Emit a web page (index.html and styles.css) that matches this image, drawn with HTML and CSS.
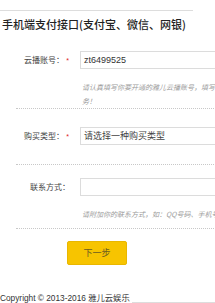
FILE: index.html
```html
<!DOCTYPE html>
<html lang="zh-CN">
<head>
<meta charset="utf-8">
<title>手机端支付接口</title>
<link rel="stylesheet" href="styles.css">
</head>
<body>
<div class="page">
  <div class="topline"></div>
  <h1 class="title">手机端支付接口(支付宝、微信、网银)</h1>
  <div class="form">
    <div class="row row-account">
      <div class="field">
        <div class="label">云播账号：<span class="req">*</span></div>
        <div class="input">zt6499525</div>
      </div>
      <p class="help">请认真填写你要开通的雅儿云播账号，填写错误将无法提供服务！</p>
    </div>
    <div class="row row-type">
      <div class="field">
        <div class="label">购买类型：<span class="req">*</span></div>
        <div class="input select">请选择一种购买类型</div>
      </div>
    </div>
    <div class="row row-contact">
      <div class="field">
        <div class="label label-opt">联系方式：</div>
        <div class="input"></div>
      </div>
      <p class="help">请附加你的联系方式，如：QQ号码、手机号码</p>
    </div>
  </div>
  <div class="actions">
    <div class="btn">下一步</div>
  </div>
  <div class="footer">
    <span class="copy">Copyright © 2013-2016 雅儿云娱乐</span>
    <span class="footer-rule"></span>
  </div>
</div>
</body>
</html>
```

FILE: styles.css
```css
html, body {
  margin: 0;
  padding: 0;
  background: #fff;
  overflow: hidden;
}
body {
  font-family: "Liberation Sans", "Noto Sans CJK SC", sans-serif;
  color: #333;
}
.page {
  width: 300px;
}
.topline {
  width: 193px;
  height: 0;
  border-top: 1px solid #ddd;
  margin-top: 10px;
}
.title {
  margin: 6px 0 0 2px;
  font-size: 11px;
  line-height: 14px;
  font-weight: 500;
  color: #222;
  font-family: "Noto Sans CJK SC", "Liberation Sans", sans-serif;
  white-space: nowrap;
}
.form {
  margin-top: 0;
  width: 284px;
  margin-left: 16px;
}
.row {
  border-bottom: 1px dotted #c8c8c8;
}
.row-account {
  padding-top: 20px;
}
.row-type {
  padding: 18px 0 19px;
}
.row-contact {
  padding: 13px 0 7px;
}
.field {
  display: flex;
  align-items: center;
}
.label {
  width: 54px;
  text-align: right;
  font-size: 8px;
  line-height: 10px;
  color: #444;
  font-family: "Noto Sans CJK SC", sans-serif;
  white-space: nowrap;
}
.req {
  display: inline-block;
  width: 5px;
  margin-left: 1px;
  text-align: center;
  color: #e02020;
  font-size: 7px;
  font-family: "Liberation Sans", sans-serif;
}
.input {
  margin-left: 10px;
  width: 130px;
  height: 16px;
  border: 1px solid #dcdcdc;
  font-size: 9px;
  line-height: 16px;
  padding: 0 3px;
  color: #333;
  box-sizing: content-box;
  font-family: "Liberation Sans", "Noto Sans CJK SC", sans-serif;
}
.select {
  width: 200px;
  color: #444;
}
.help {
  margin: 11px 0 0 66px;
  width: 189px;
  font-size: 7px;
  line-height: 14px;
  font-style: italic;
  color: #9a9a9a;
  font-family: "Noto Sans CJK SC", sans-serif;
}
.actions {
  margin-top: 12px;
  padding-left: 67px;
}
.btn {
  width: 60px;
  height: 24px;
  box-sizing: border-box;
  background: #f7c400;
  border: 1px solid #e9b700;
  border-radius: 2px;
  color: #6b5c20;
  font-size: 9px;
  line-height: 22px;
  text-align: center;
  font-family: "Noto Sans CJK SC", sans-serif;
}
.footer {
  margin-top: 28px;
  display: flex;
  align-items: flex-end;
}
.copy {
  font-size: 8.3px;
  line-height: 10px;
  color: #333;
  white-space: nowrap;
}
.footer-rule {
  flex: 1;
  border-bottom: 1px solid #ddd;
  margin-left: 2px;
}
```
